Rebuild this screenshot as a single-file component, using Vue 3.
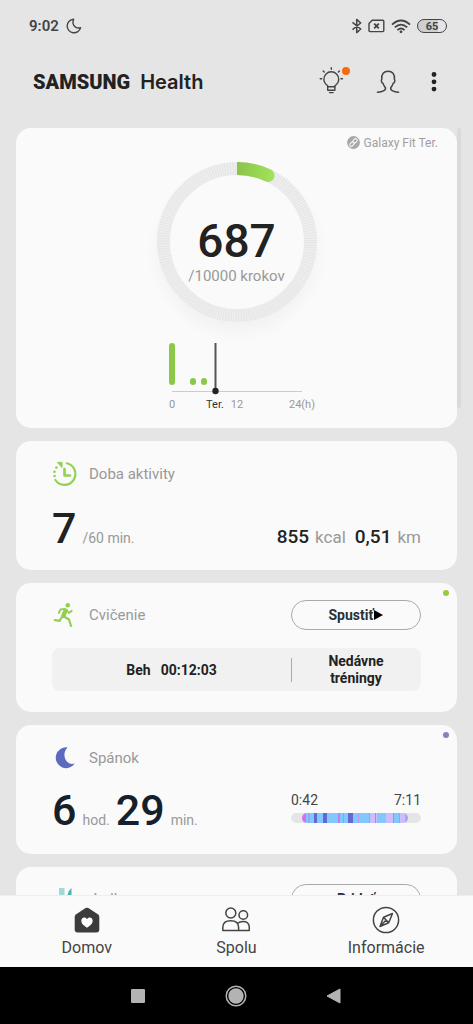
<script setup>
const ringRadius = 73.5
const steps = 687
const goal = 10000

const sleepStages = [
  ['#d96af5', 4], ['#83c8fd', 2], ['#8badf5', 2], ['#83c8fd', 4], ['#6269d6', 3],
  ['#83c8fd', 6], ['#6269d6', 4], ['#83c8fd', 11], ['#c07df2', 2], ['#83c8fd', 3],
  ['#8ba4f0', 1], ['#83c8fd', 4], ['#6269d6', 5], ['#83c8fd', 5], ['#b99cf5', 1],
  ['#83c8fd', 10], ['#cf86f5', 1], ['#cdbdfb', 5], ['#cf6ff2', 1], ['#cdbdfb', 1], ['#83c8fd', 9],
  ['#cdbdfb', 7], ['#cf6ff2', 1], ['#83c8fd', 5], ['#cf86f5', 1], ['#cdbdfb', 5], ['#a9a4f6', 3],
]
</script>

<template>
  <div class="screen">
    <div class="status">
      <span class="clock">9:02</span>
      <svg class="dnd" width="16" height="16" viewBox="0 0 16 16" fill="none" stroke="#444" stroke-width="1.4" stroke-linejoin="round">
        <path d="M7.6 1.2A6.8 6.8 0 1 0 14.6 9.6C10 11.4 5.2 7 7.6 1.2Z" />
      </svg>
      <div class="status-icons">
        <svg width="11" height="16" viewBox="0 0 11 16" fill="none" stroke="#444" stroke-width="1.5" stroke-linejoin="round">
          <path d="M1.500 4.400 9.700 11 5.700 14.600V1.400L9.700 5 1.500 11.600" />
        </svg>
        <svg width="17" height="14" viewBox="0 0 17 14" fill="none" stroke="#444" stroke-width="1.4">
          <path d="M4.200 1.200H14.800Q15.800 1.200 15.800 2.200V11.600Q15.800 12.600 14.800 12.600H2Q1 12.600 1 11.600V4.600Z" stroke-linejoin="round" />
          <path d="M6.200 4.700 10.800 9.300M10.800 4.700 6.200 9.300" stroke-width="1.8" />
        </svg>
        <svg width="20" height="15" viewBox="0 0 20 15" fill="none" stroke="#444" stroke-width="1.8">
          <path d="M1 5.600Q10-2.600 19 5.600" />
          <path d="M3.800 8.400Q10 2.800 16.200 8.400" />
          <path d="M6.400 11.200Q10 7.800 13.600 11.200" />
          <circle cx="10" cy="12.800" r="1.400" fill="#444" stroke="none" />
        </svg>
        <span class="battery">65</span>
      </div>
    </div>

    <header class="header">
      <h1 class="brand"><span class="brand-name">SAMSUNG</span><span class="brand-app">Health</span></h1>
      <button class="icon-button" type="button" aria-label="Tipy">
        <svg width="32" height="32" viewBox="0 0 32 32" fill="none" stroke="#444" stroke-width="1.4" stroke-linecap="round">
          <path d="M9.700 19.800C7 17.800 5.900 15.800 5.900 13.200a7.400 7.400 0 0 1 14.800 0c0 2.600-1.200 4.600-3.800 6.600v4.400H9.700Z" stroke-linejoin="round" />
          <path d="M9.700 20.800H17M11.500 26.600h3.600" />
          <path d="M13.300 1.800v1.400M5.200 5l1 1M21.400 5l-1 1M2.200 12.800h1.500M23 12.800h1.500" />
        </svg>
        <i class="badge"></i>
      </button>
      <button class="icon-button" type="button" aria-label="Profil">
        <svg width="24" height="24" viewBox="0 0 24 24" fill="none" stroke="#444" stroke-width="1.5" stroke-linecap="round" stroke-linejoin="round">
          <path d="M1.500 22.300C6 21.800 10.300 20.500 9.400 17.700C8.800 16.600 7.600 15.600 7.100 13.400C5.300 12.700 5 10.300 5.800 9.300C5.200 4 8 1.300 12.100 1.300S19 4 18.400 9.300C19.200 10.300 18.900 12.700 17.100 13.400C16.600 15.600 15.400 16.600 14.800 17.700C13.900 20.500 18 21.800 22.500 22.300" />
        </svg>
      </button>
      <button class="icon-button more" type="button" aria-label="Viac">
        <svg width="6" height="20" viewBox="0 0 6 20" fill="#222">
          <circle cx="3" cy="2.500" r="2.400" /><circle cx="3" cy="9.800" r="2.400" /><circle cx="3" cy="17.100" r="2.400" />
        </svg>
      </button>
    </header>

    <main class="feed">
      <i class="scrollbar"></i>

      <section class="card steps">
        <div class="device">
          <svg width="13" height="13" viewBox="0 0 13 13">
            <circle cx="6.500" cy="6.500" r="6.400" fill="#a8a8a8" />
            <g fill="none" stroke="#fafafa" stroke-width="1" transform="rotate(-45 6.500 6.500)">
              <rect x="1.800" y="4.900" width="5" height="3.200" rx="1.600" /><rect x="6.200" y="4.900" width="5" height="3.200" rx="1.600" />
            </g>
          </svg>
          <span>Galaxy Fit Ter.</span>
        </div>
        <div class="ring">
          <svg width="160" height="160" viewBox="0 0 160 160" fill="none">
            <defs>
              <linearGradient id="progress" x1="80" y1="0" x2="117" y2="0" gradientUnits="userSpaceOnUse">
                <stop offset="0" stop-color="#8bc34a" /><stop offset="1" stop-color="#a2e35c" />
              </linearGradient>
            </defs>
            <circle cx="80" cy="80" :r="ringRadius" stroke="#eeeeee" stroke-width="13" />
            <circle cx="80" cy="80" :r="ringRadius" stroke="#e5e5e5" stroke-width="13" stroke-dasharray="1 1.565" />
            <path d="M80 0A80 80 0 0 1 114.200 7.700A6.500 6.500 0 0 1 108.600 19.400A67 67 0 0 0 80 13Z" fill="url(#progress)" />
          </svg>
          <div class="ring-text">
            <strong>{{ steps }}</strong>
            <span>/{{ goal }} krokov</span>
          </div>
        </div>
        <svg class="chart" width="160" height="72" viewBox="0 0 160 72">
          <path d="M15 50.500H145" stroke="#ccc" />
          <g fill="#8bc84a">
            <rect x="12" y="2" width="6" height="42" rx="3" />
            <rect x="33" y="37" width="6" height="7" rx="3" />
            <rect x="44" y="37" width="6" height="7" rx="3" />
          </g>
          <path d="M58.500 2V50" stroke="#555" stroke-width="2" />
          <circle cx="58.500" cy="50" r="3.200" fill="#222" />
          <g font-size="11" fill="#999" text-anchor="middle">
            <text x="15" y="67">0</text>
            <text x="58" y="67" fill="#333">Ter.</text>
            <text x="80" y="67">12</text>
            <text x="145" y="67">24(h)</text>
          </g>
        </svg>
      </section>

      <section class="card">
        <div class="head">
          <svg class="head-icon" width="26" height="26" viewBox="0 0 26 26" fill="none" stroke="#92d050" stroke-width="2.2">
            <path d="M14.800 2.300A10.900 10.900 0 1 1 3.400 19" stroke-linecap="round" />
            <path d="M12.500 8V14.500H18" stroke-width="2.6" stroke-linejoin="round" stroke-linecap="round" />
            <g fill="#92d050" stroke="none">
              <path d="M5.500 1.400H10V6.500Z" stroke="#92d050" stroke-linejoin="round" stroke-width="1" />
              <circle cx="4.400" cy="6.500" r="1.300" /><circle cx="2.500" cy="10.800" r="1.300" /><circle cx="2.600" cy="15" r="1.300" />
            </g>
          </svg>
          <h2>Doba aktivity</h2>
        </div>
        <div class="values">
          <p><b>7</b><span>/60 min.</span></p>
          <p class="small"><b>855</b><span>kcal</span><b>0,51</b><span>km</span></p>
        </div>
      </section>

      <section class="card action">
        <i class="dot green"></i>
        <div class="head">
          <svg class="head-icon" width="26" height="26" viewBox="0 0 26 26" fill="none" stroke="#92d050" stroke-linecap="round" stroke-linejoin="round">
            <circle cx="15.800" cy="3.300" r="2.300" fill="#92d050" stroke="none" />
            <path d="M13.500 8.500 11.300 14" stroke-width="4.400" />
            <path d="M12.500 6.900 8.500 7.400 6.800 11" stroke-width="1.800" />
            <path d="M15 8.500 17 11 19.800 8.800" stroke-width="1.800" />
            <path d="M10.500 14 7.500 18.800 2.800 18.200" stroke-width="2.200" />
            <path d="M12 14.500 17 17.500 19 24" stroke-width="2.200" />
          </svg>
          <h2>Cvičenie</h2>
          <button class="pill" type="button">Spustiť<svg width="9" height="10" viewBox="0 0 9 10"><path d="M0 0 9 5 0 10Z" /></svg></button>
        </div>
        <div class="panel">
          <p class="last"><span>Beh</span><span>00:12:03</span></p>
          <button class="recent" type="button">Nedávne tréningy</button>
        </div>
      </section>

      <section class="card">
        <i class="dot violet"></i>
        <div class="head">
          <svg class="head-icon" width="26" height="26" viewBox="0 0 26 26" fill="#5c6bc0">
            <path d="M15.500 2.400A10.400 10.400 0 1 0 22.800 18.500C14.500 21.500 8.500 9.500 15.500 2.400Z" />
          </svg>
          <h2>Spánok</h2>
        </div>
        <div class="values night">
          <p><b>6</b><span>hod.</span><b>29</b><span>min.</span></p>
          <div class="sleep">
            <div class="times"><span>0:42</span><span>7:11</span></div>
            <div class="track">
              <div class="stages">
                <i v-for="([color, size], n) in sleepStages" :key="n" :style="{ background: color, flexGrow: size }"></i>
              </div>
            </div>
          </div>
        </div>
      </section>

      <section class="card action">
        <div class="head">
          <svg class="head-icon" width="26" height="26" viewBox="0 0 26 26">
            <path d="M7 2H12.500V10Q12.500 12 10.800 12V25H8.700V12Q7 12 7 10Z" fill="#a5d8d2" />
            <path d="M19.500 2V25H17.500V12H15Q15.500 5 19.500 2Z" fill="#4db6ac" />
          </svg>
          <h2>Jedlo</h2>
          <button class="pill" type="button">Pridať</button>
        </div>
      </section>
    </main>

    <nav class="tabs">
      <a href="#domov">
        <svg width="28" height="28" viewBox="0 0 28 28">
          <path d="M12.600 2.100Q14 1.200 15.400 2.100L24.800 8.300Q26.300 9.300 26.300 11V23.500Q26.300 26.500 23.300 26.500H4.700Q1.700 26.500 1.700 23.500V11Q1.700 9.300 3.200 8.300Z" fill="#3c3c3c" />
          <path d="M14 21.800C10.500 19.500 8.300 17.500 8.300 14.800C8.300 11.300 12.500 10.300 14 13.200C15.500 10.300 19.700 11.300 19.700 14.800C19.700 17.500 17.500 19.500 14 21.800Z" fill="#fff" />
        </svg>
        <span>Domov</span>
      </a>
      <a href="#spolu">
        <svg width="28" height="28" viewBox="0 0 28 28" fill="none" stroke="#444" stroke-width="1.5" stroke-linejoin="round">
          <circle cx="8.800" cy="7" r="5" />
          <circle cx="21.300" cy="9" r="4.300" />
          <path d="M.8 24.500V21.500C.8 17 4 14.800 8.700 14.800S16.600 17 16.600 21.500V24.500Z" />
          <path d="M15.800 17.300C17 16.200 19 15.500 21 15.500C25 15.500 27.300 17.800 27.300 21.500V24.500H16.600" />
        </svg>
        <span>Spolu</span>
      </a>
      <a href="#informacie">
        <svg width="28" height="28" viewBox="0 0 28 28" fill="none" stroke="#444" stroke-width="1.5" stroke-linejoin="round">
          <circle cx="14" cy="14" r="12.600" />
          <path d="M20.500 7.500 16.700 16.700 8 20.500 11.500 11.300ZM11.500 11.300 16.700 16.700M14.100 14 8 20.500" />
        </svg>
        <span>Informácie</span>
      </a>
    </nav>

    <div class="system">
      <button type="button" aria-label="Posledné aplikácie"><svg width="16" height="16"><rect x="1" y="1" width="14" height="14" rx="1" fill="#b3b3b3" /></svg></button>
      <button type="button" aria-label="Plocha"><svg width="22" height="22" viewBox="0 0 22 22"><circle cx="11" cy="11" r="9.800" fill="none" stroke="#b3b3b3" stroke-width="1.5" /><circle cx="11" cy="11" r="7.700" fill="#b3b3b3" /></svg></button>
      <button type="button" aria-label="Späť"><svg width="16" height="16"><path d="M14 1V15L1 8Z" fill="#b3b3b3" stroke="#b3b3b3" stroke-linejoin="round" /></svg></button>
    </div>
  </div>
</template>

<style>
body { margin: 0; background: #e5e5e5; }
</style>

<style scoped>
* { box-sizing: border-box; }
h1, h2, p { margin: 0; font-weight: 400; }
button { padding: 0; border: 0; background: none; color: inherit; font: inherit; }
svg { display: block; flex: none; }

.screen {
  display: flex;
  flex-direction: column;
  height: 100vh;
  background: #e5e5e5;
  color: #222;
  font-family: Roboto, "Noto Sans", sans-serif;
  font-size: 15px;
}

.status { display: flex; align-items: center; height: 50px; padding: 2px 26px 0 29px; color: #444; flex: none; }
.clock { font-size: 15px; font-weight: 600; }
.dnd { margin-left: 7px; }
.status-icons { display: flex; align-items: center; gap: 6px; margin-left: auto; }
.battery {
  width: 30px; height: 14px; border: 1px solid #444; border-radius: 7px;
  background: linear-gradient(90deg, #cfcfcf 70%, #e5e5e5 70%);
  font-size: 11px; line-height: 13px; font-weight: 700; text-align: center;
}

.header { display: flex; align-items: center; height: 64px; padding: 0 36px 0 33px; flex: none; }
.brand { display: flex; gap: 10px; margin-right: auto; font-family: Inter, sans-serif; font-size: 20px; line-height: 24px; }
.brand-name { font-family: Roboto, sans-serif; font-weight: 900; }
.brand-app { font-weight: 600; }
.icon-button { position: relative; display: flex; margin-left: 26px; }
.more { margin-left: 31px; }
.badge { position: absolute; top: 1px; right: 0; width: 8px; height: 8px; border-radius: 50%; background: #f96a0e; }

.feed { position: relative; display: flex; flex-direction: column; gap: 13px; flex: 1; min-height: 0; margin-top: 14px; padding: 0 16px; overflow: hidden; }
.scrollbar { position: absolute; top: 0; right: 12px; width: 4px; height: 280px; background: #dadada; border-radius: 2px; }
.card { position: relative; flex: none; min-height: 129px; padding: 20px 36px 18px; border-radius: 15px; background: #fafafa; }
.action { padding-top: 19px; }

.steps { display: flex; flex-direction: column; align-items: center; padding: 6px 19px 15px; }
.device { display: flex; align-items: center; align-self: flex-end; gap: 4px; height: 17px; color: #a0a0a0; font-size: 12px; }
.ring { position: relative; margin-top: 11px; border-radius: 50%; box-shadow: 0 10px 16px #00000009; }
.ring-text { position: absolute; inset: 0; display: flex; flex-direction: column; align-items: center; padding-top: 52px; color: #999; }
.ring-text strong { color: #222; font-size: 46px; line-height: 54px; font-weight: 500; }
.ring-text span { line-height: 17px; }
.chart { margin-top: 19px; font-family: Roboto, sans-serif; }

.head { display: flex; align-items: center; height: 26px; color: #999; }
.head-icon { margin-right: 11px; }
.head h2 { font-size: 15px; }
.pill {
  display: flex; align-items: center; justify-content: center;
  width: 130px; height: 30px; margin-left: auto;
  border: 1px solid #aaa; border-radius: 15px; color: #263238; font-size: 14px; font-weight: 700;
}
.pill svg { margin-left: 1px; fill: #000; }

.values { display: flex; align-items: baseline; justify-content: space-between; margin-top: 18px; }
.values p { display: flex; align-items: baseline; color: #999; font-size: 14px; }
.values b { font-size: 43px; line-height: 46px; font-weight: 500; color: #222; }
.values span + b { margin-left: 6px; }
.values b + span { margin-left: 6px; }
.values .small { font-size: 17px; }
.values .small b { font-size: 19px; line-height: 24px; }
.values .small span + b { margin-left: 9px; }
.values.night { align-items: flex-end; margin-top: 16px; }
.night b { color: #14202b; }

.dot { position: absolute; top: 7px; right: 8px; width: 6px; height: 6px; border-radius: 50%; }
.green { background: #97ca3d; }
.violet { background: #8a7fc5; }

.panel { display: flex; align-items: center; margin-top: 20px; height: 43px; border-radius: 8px; background: #f1f1f1; font-size: 14px; font-weight: 700; }
.last { flex: 1; display: flex; justify-content: center; gap: 10px; font-weight: 700; }
.recent { position: relative; width: 130px; padding: 0 30px; line-height: 17px; }
.recent::before { content: ""; position: absolute; left: 0; top: 5px; bottom: 5px; width: 1px; background: #aaa; }

.sleep { width: 130px; padding-bottom: 10px; color: #444; }
.times { display: flex; justify-content: space-between; line-height: 18px; margin-bottom: 4px; font-size: 14px; }
.track { height: 10px; padding: 0 13px 0 11px; border-radius: 5px; background: #e5e5e5; }
.sleep .stages { display: flex; height: 10px; border-radius: 5px; overflow: hidden; }
.stages i { flex: 1 1 0; }

.tabs { position: relative; display: grid; grid-template-columns: repeat(3, 1fr); flex: none; height: 72px; padding: 0 12px; background: #fafafa; border-top: 1px solid #eee; }
.tabs a { display: flex; flex-direction: column; align-items: center; gap: 4px; padding-top: 10px; color: #444; font-size: 16px; line-height: 19px; text-decoration: none; }

.system { display: flex; align-items: center; justify-content: center; gap: 79px; height: 57px; padding-right: 2px; flex: none; background: #000; }
</style>
